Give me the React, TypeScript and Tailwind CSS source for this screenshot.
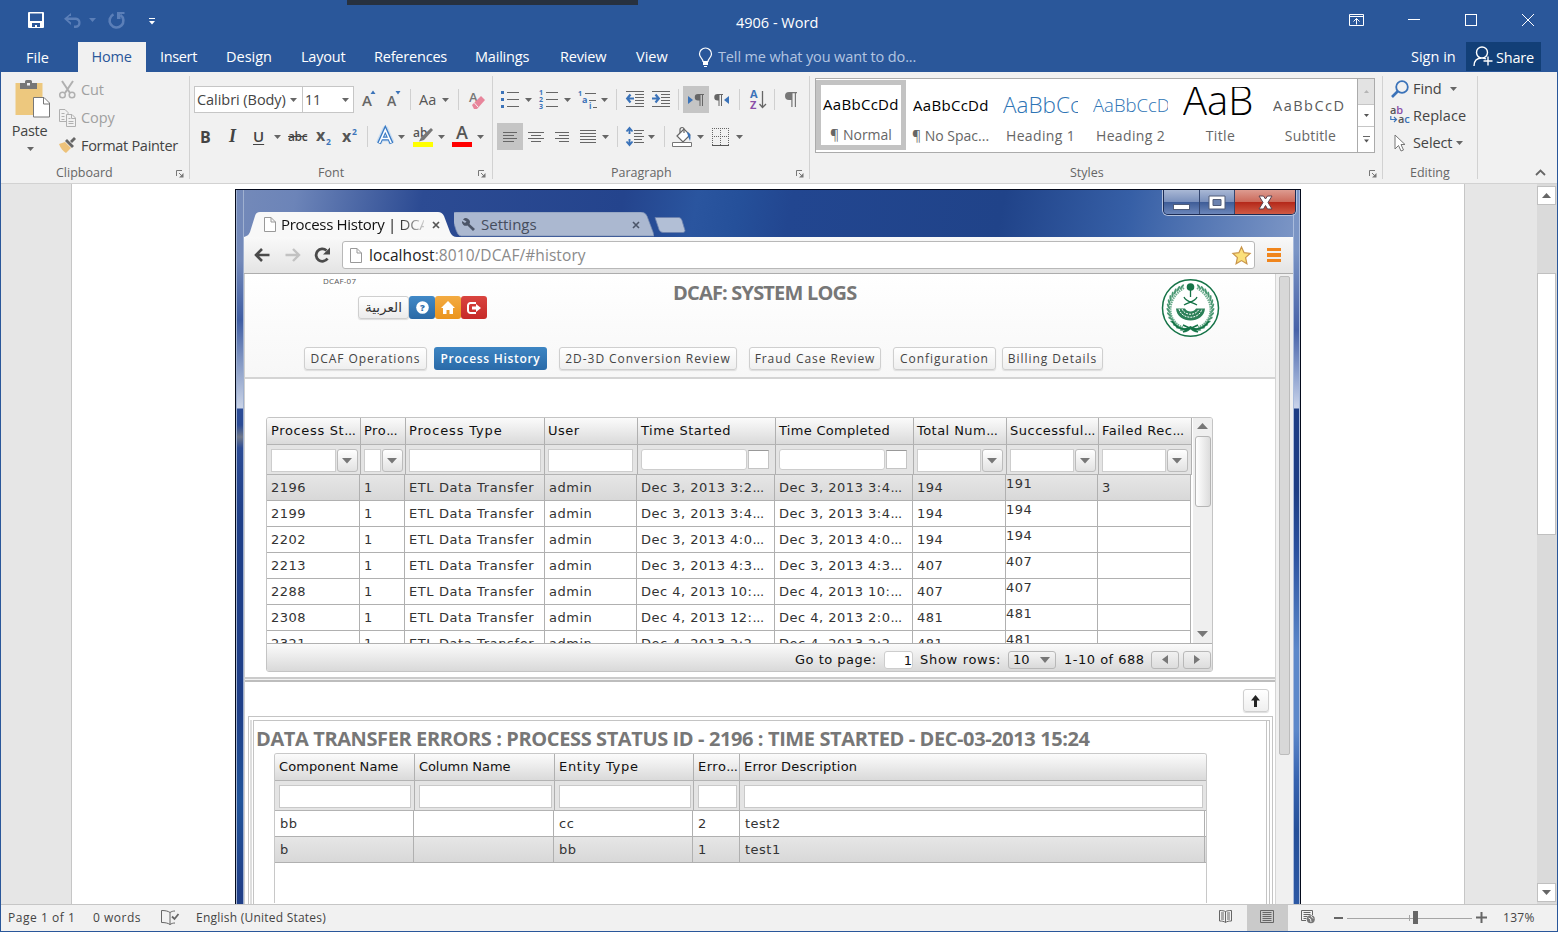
import React from 'react';

type IcoProps = { w: number; h: number; className?: string; children: React.ReactNode };

function Ico({ w, h, className = '', children }: IcoProps) {
  return (
    <svg width={w} height={h} viewBox={`0 0 ${w} ${h}`} fill="none" className={`shrink-0 overflow-visible ${className}`}>
      {children}
    </svg>
  );
}

function Caret({ className = '', color = '#666' }: { className?: string; color?: string }) {
  return (
    <Ico w={7} h={4} className={className}>
      <path d="M0 0h7L3.5 4z" fill={color} />
    </Ico>
  );
}

function Sep({ className = '' }: { className?: string }) {
  return <div className={`h-[21px] w-px shrink-0 bg-[#d0d0d0] ${className}`} />;
}

function GroupSep() {
  return <div className="mt-[4px] h-[103px] w-px shrink-0 bg-[#d2d2d2]" />;
}

function Launcher({ className = '' }: { className?: string }) {
  return (
    <Ico w={8} h={8} className={className}>
      <path d="M.5 6V.5H6" stroke="#777" />
      <path d="M3 3l3 3" stroke="#777" />
      <path d="M7.5 3v4.5H3z" fill="#777" />
    </Ico>
  );
}

function Lines({ rows, h, w }: { rows: [number, number][]; h: number; w: number }) {
  return (
    <Ico w={w} h={h}>
      {rows.map(([a, b], i) => (
        <path key={i} d={`M${a} ${i * 3 + 0.5}H${b}`} stroke="#666" />
      ))}
    </Ico>
  );
}

/* ---------- Title bar and tabs ---------- */

function TitleBar() {
  return (
    <div className="flex h-[42px] items-start">
      <Ico w={16} h={16} className="mt-[12px] ml-[27px]">
        <path d="M0 1a1 1 0 0 1 1-1h14a1 1 0 0 1 1 1v14a1 1 0 0 1-1 1H1a1 1 0 0 1-1-1z" fill="#fff" />
        <path d="M2 1.500h12V9H2zM4 11h8v4H9v-2H7v2H4z" fill="#2a579a" />
      </Ico>
      <Ico w={18} h={15} className="mt-[13px] ml-[20px]">
        <path d="M7 0v3H5.500L4 4.500h8a5.300 5.300 0 0 1 0 10.500h-2v-2.400h2a2.900 2.900 0 0 0 0-5.700H4L7 9.500V12L0 5.800z" fill="#5b7fb8" />
      </Ico>
      <Caret className="mt-[18px] ml-[7px]" color="#5b7fb8" />
      <Ico w={17} h={17} className="mt-[12px] ml-[12px]">
        <path d="M12.500 3a6.900 6.900 0 1 1-7-.6" stroke="#5b7fb8" strokeWidth="2.600" />
        <path d="M9 0h7.500v2H12.500V7H9z" fill="#5b7fb8" />
      </Ico>
      <Ico w={6} h={7} className="mt-[18px] ml-[24px]">
        <path d="M0 .5h6" stroke="#fff" />
        <path d="M0 3h6L3 6.500z" fill="#fff" />
      </Ico>
      <span className="mt-[13px] ml-[581px] w-[84px] text-[14.500px] leading-[20px] whitespace-nowrap text-white">4906 - Word</span>
      <Ico w={15} h={12} className="mt-[14px] ml-[529px]">
        <path d="M.5 .5h14v11H.5zM.5 2.500h14M7.500 10.500v-6M4.500 7.500l3-3 3 3" stroke="#fff" />
      </Ico>
      <div className="mt-[19px] ml-[44px] h-px w-[12px] bg-white" />
      <div className="mt-[14px] ml-[45px] h-[12px] w-[12px] border border-white" />
      <Ico w={12} h={12} className="mt-[14px] ml-[45px]">
        <path d="M0 0l12 12M12 0L0 12" stroke="#fff" />
      </Ico>
    </div>
  );
}

const tabs = [
  { label: 'Insert', cls: 'ml-[14px] w-[36px] tracking-[-0.350px]' },
  { label: 'Design', cls: 'ml-[30px] w-[46px] tracking-[0px]' },
  { label: 'Layout', cls: 'ml-[29px] w-[44px]' },
  { label: 'References', cls: 'ml-[29px] w-[72px]' },
  { label: 'Mailings', cls: 'ml-[29px] w-[56px]' },
  { label: 'Review', cls: 'ml-[29px] w-[47px]' },
  { label: 'View', cls: 'ml-[29px] w-[32px] tracking-[0px]' },
];

function TabBar() {
  return (
    <div className="flex h-[30px] items-center text-[14.500px] tracking-[-0.2px] whitespace-nowrap text-white">
      <span className="mt-px ml-[25px] w-[24px] tracking-[0px]">File</span>
      <span className="ml-[28px] flex h-[30px] w-[68px] items-center justify-center bg-[#f1f1f1] pr-[1px] text-[#2a579a]">Home</span>
      {tabs.map((t) => (
        <span key={t.label} className={`shrink-0 ${t.cls}`}>{t.label}</span>
      ))}
      <Ico w={13} h={19} className="ml-[31px]">
        <path d="M4 13.500c0-3-3.500-4-3.500-7.500a6 6 0 0 1 12 0c0 3.500-3.500 4.500-3.500 7.500z" stroke="#fff" strokeWidth="1.200" />
        <path d="M4 14h5v3H4zM5 18h3v1H5z" fill="#fff" />
      </Ico>
      <span className="ml-[6px] w-[199px] tracking-[-0.130px] text-[#b3c5e1]">Tell me what you want to do...</span>
      <span className="ml-[494px] w-[46px] tracking-[0px]">Sign in</span>
      <div className="mb-px ml-[9px] flex h-[29px] w-[75px] items-center bg-[#123f77]">
        <Ico w={20} h={21} className="ml-[7px]">
          <path d="M1 20c0-5 3-8 8-8a5.500 5.500 0 1 0 0-11 5.500 5.500 0 0 0 0 11c2 0 3 .4 4 1M15 10.500v9M10.500 15h9" stroke="#fff" strokeWidth="1.400" />
        </Ico>
        <span className="mt-[2px] ml-[3px]">Share</span>
      </div>
    </div>
  );
}

/* ---------- Ribbon ---------- */

function ClipboardGroup() {
  return (
    <div className="flex w-[188px] flex-col">
      <div className="flex h-[90px] shrink-0">
        <div className="flex w-[58px] flex-col items-center">
          <Ico w={36} h={39} className="mt-[8px] ml-[4px]">
            <path d="M1.500 3h27v32h-27z" fill="#edc87e" />
            <path d="M6 3h5V1.500A1.500 1.500 0 0 1 12.500 0h4A1.500 1.500 0 0 1 18 1.500V3h5v6H6z" fill="#777" />
            <path d="M13 3h3v2.500h-3z" fill="#f1f1f1" />
            <path d="M19.500 17.500H30l5.500 5.500v14h-16z" fill="#fff" stroke="#777" />
            <path d="M29.500 18v6h6" stroke="#777" />
          </Ico>
          <span className="mt-[1px] pr-[1px] text-[14.500px] leading-[22px] tracking-[-0.300px] text-[#444]">Paste</span>
          <Caret className="mt-[5px]" />
        </div>
        <div className="flex flex-col pt-[4px] text-[14.500px] tracking-[-0.1px] whitespace-nowrap">
          <div className="flex h-[28px] items-center text-[#a0a0a0]">
            <Ico w={17} h={18}>
              <path d="M3 0l8 12M14 0L6 12" stroke="#b0b0b0" strokeWidth="2" />
              <circle cx="3.500" cy="14" r="2.800" stroke="#b0b0b0" strokeWidth="1.500" />
              <circle cx="13" cy="14" r="2.800" stroke="#b0b0b0" strokeWidth="1.500" />
            </Ico>
            <span className="ml-[5px]">Cut</span>
          </div>
          <div className="flex h-[28px] items-center text-[#a0a0a0]">
            <Ico w={17} h={18}>
              <path d="M7 12.500H.5V.5H6l3 3V5M2.500 4.500h3M2.500 7.500h3M2.500 10.500h3" stroke="#b0b0b0" />
              <path d="M7.500 5.500H13l3.500 3.500v8.500h-9zM12.500 5.500v4h4M9.500 12.500h5M9.500 14.500h5M9.500 9.500h2" stroke="#b0b0b0" />
            </Ico>
            <span className="ml-[5px]">Copy</span>
          </div>
          <div className="flex h-[28px] items-center text-[#444]">
            <Ico w={17} h={16} className="mb-[2px]">
              <path d="M0 7l6-2 6 6-5 5C4 14 2 12 0 7z" fill="#edc27a" />
              <path d="M6 4l2-2 7 7-2 2zM11 4l4-4 2 2-4 4z" fill="#666" />
            </Ico>
            <span className="ml-[5px] tracking-[-0.300px]">Format Painter</span>
          </div>
        </div>
      </div>
      <div className="flex h-[23px] shrink-0 items-center text-[12.500px] text-[#666]">
        <span className="ml-[55px] w-[58px]">Clipboard</span>
        <Launcher className="ml-[62px]" />
      </div>
    </div>
  );
}

function FontGroup() {
  return (
    <div className="flex w-[302px] flex-col">
      <div className="mt-[14px] flex h-[27px] shrink-0 items-center">
        <div className="ml-[4px] flex h-[27px] w-[109px] items-center border border-[#c6c6c6] bg-white">
          <span className="ml-[2px] w-[90px] text-[14.500px] tracking-[-0.050px] whitespace-nowrap text-[#444]">Calibri (Body)</span>
          <Caret className="ml-[3px]" />
        </div>
        <div className="ml-[-1px] flex h-[27px] w-[52px] items-center border border-[#c6c6c6] bg-white">
          <span className="ml-[2px] w-[20px] text-[14px] text-[#444]">11</span>
          <Caret className="ml-[17px]" />
        </div>
        <Ico w={14} h={17} className="ml-[8px]">
          <text x="0" y="14.500" fontSize="15" fontWeight="600" fill="#666" fontFamily="Open Sans">A</text>
          <path d="M8.500 3l2.500-3.500L13.500 3z" fill="#3b73b9" />
        </Ico>
        <Ico w={14} h={17} className="ml-[11px]">
          <text x="0" y="15" fontSize="14" fontWeight="600" fill="#666" fontFamily="Open Sans">A</text>
          <path d="M8.500 0l2.500 3.500L13.500 0z" fill="#3b73b9" />
        </Ico>
        <Sep className="ml-[9px]" />
        <span className="ml-[8px] w-[20px] text-[14.500px] text-[#555]">Aa</span>
        <Caret className="ml-[3px]" />
        <Sep className="ml-[9px]" />
        <Ico w={16} h={18} className="ml-[10px]">
          <text x="0" y="11" fontSize="13" fontWeight="600" fill="#777" fontFamily="Open Sans">A</text>
          <path d="M3 14L12 5l4 4-8 9H5z" fill="#e8859b" />
          <path d="M5 11.500l4 4.500" stroke="#f1f1f1" />
        </Ico>
      </div>
      <div className="mt-[10px] flex h-[27px] shrink-0 items-center text-[#444]">
        <span className="ml-[10px] w-[14px] text-[16px] font-bold">B</span>
        <span className="ml-[15px] w-[12px] font-['Liberation_Serif',serif] text-[18px] font-bold italic">I</span>
        <span className="ml-[12px] w-[14px] text-[15px] font-semibold underline underline-offset-2">U</span>
        <Caret className="ml-[7px]" />
        <span className="ml-[7px] w-[21px] text-[12px] font-semibold tracking-[-0.400px] line-through">abc</span>
        <Ico w={16} h={18} className="ml-[7px]">
          <text x="0" y="13" fontSize="16" fontWeight="700" fill="#555" fontFamily="Open Sans">x</text>
          <text x="10" y="17" fontSize="8.500" fontWeight="700" fill="#3b73b9" fontFamily="Open Sans">2</text>
        </Ico>
        <Ico w={16} h={20} className="ml-[10px]">
          <text x="0" y="15" fontSize="16" fontWeight="700" fill="#555" fontFamily="Open Sans">x</text>
          <text x="10" y="8" fontSize="8.500" fontWeight="700" fill="#3b73b9" fontFamily="Open Sans">2</text>
        </Ico>
        <Sep className="ml-[9px]" />
        <Ico w={18} h={20} className="ml-[9px]">
          <path d="M2 16L8.300 2L14.600 16M4.500 11.500h7.600" stroke="#b9d4f0" strokeWidth="6" strokeLinejoin="round" opacity=".7" />
          <path d="M2 16.500L8.300 2.500L14.600 16.500M4.500 11.500h7.600" stroke="#3b7bc4" strokeWidth="4" />
          <path d="M2.400 16L8.300 3L14.200 16M4.500 11.500h7.600" stroke="#fff" strokeWidth="1.600" />
        </Ico>
        <Caret className="ml-[3px]" />
        <Ico w={21} h={20} className="ml-[8px]">
          <text x="0" y="10" fontSize="12" fontWeight="600" fill="#555" fontFamily="Open Sans">ab</text>
          <path d="M18 1l2 2-9 10-5 1.500 2-4z" fill="#777" />
          <path d="M0 15h20v5H0z" fill="#ff0" />
        </Ico>
        <Caret className="ml-[4px]" />
        <Ico w={20} h={21} className="ml-[7px]">
          <text x="4" y="13" fontSize="18" fontWeight="600" fill="#555" fontFamily="Open Sans">A</text>
          <path d="M0 16h20v5H0z" fill="#f00" />
        </Ico>
        <Caret className="ml-[5px]" />
      </div>
      <div className="mt-[12px] flex h-[23px] shrink-0 items-center text-[12.500px] text-[#666]">
        <span className="ml-[128px] w-[27px]">Font</span>
        <Launcher className="ml-[133px]" />
      </div>
    </div>
  );
}

function Indent({ out }: { out?: boolean }) {
  return (
    <Ico w={18} h={17}>
      <path d="M0 .5h18M9 3.500h9M9 6.500h9M9 9.500h9M9 12.500h9M0 15.500h18" stroke="#666" />
      {out ? (
        <path d="M8 7.500H1.500M4.500 3.500L1.200 7.500l3.300 4" stroke="#3b73b9" strokeWidth="2.200" />
      ) : (
        <path d="M0 7.500h6.500M3.500 3.500l3.300 4-3.300 4" stroke="#3b73b9" strokeWidth="2.200" />
      )}
    </Ico>
  );
}

function ParagraphGroup() {
  return (
    <div className="flex w-[316px] flex-col">
      <div className="mt-[14px] flex h-[27px] shrink-0 items-center">
        <Ico w={18} h={17} className="ml-[8px]">
          <path d="M0 0h3v3H0zM0 7h3v3H0zM0 14h3v3H0z" fill="#3b73b9" />
          <path d="M6 1.500h12M6 8.500h12M6 15.500h12" stroke="#666" />
        </Ico>
        <Caret className="ml-[6px]" />
        <Ico w={19} h={19} className="ml-[7px]">
          <text x="0" y="5" fontSize="7" fontWeight="700" fill="#3b73b9" fontFamily="Open Sans">1</text>
          <text x="0" y="12" fontSize="7" fontWeight="700" fill="#3b73b9" fontFamily="Open Sans">2</text>
          <text x="0" y="19" fontSize="7" fontWeight="700" fill="#3b73b9" fontFamily="Open Sans">3</text>
          <path d="M7 2.500h12M7 9.500h12M7 16.500h12" stroke="#666" />
        </Ico>
        <Caret className="ml-[6px]" />
        <Ico w={19} h={18} className="ml-[7px]">
          <text x="0" y="5" fontSize="7" fontWeight="700" fill="#3b73b9" fontFamily="Open Sans">1</text>
          <text x="4" y="12" fontSize="9" fontWeight="700" fill="#3b73b9" fontFamily="Open Sans">a</text>
          <text x="11" y="18" fontSize="8" fontWeight="700" fill="#3b73b9" fontFamily="Open Sans">i</text>
          <path d="M7 2.500h11M11 9.500h7M15 16.500h4" stroke="#666" />
        </Ico>
        <Caret className="ml-[4px]" />
        <Sep className="ml-[8px]" />
        <div className="ml-[9px]"><Indent out /></div>
        <div className="ml-[8px]"><Indent /></div>
        <Sep className="ml-[8px]" />
        <div className="ml-[4px] flex h-[27px] w-[26px] shrink-0 items-center justify-center bg-[#c5c5c5]">
          <Ico w={16} h={12}>
            <path d="M0 2v8l5-4z" fill="#3b73b9" />
            <path d="M10 0h6v1h-1v11h-1V1h-1.500v11h-1V6.500H10a3.250 3.250 0 0 1 0-6.500z" fill="#666" />
          </Ico>
        </div>
        <Ico w={16} h={12} className="ml-[5px]">
          <path d="M15 2v8l-5-4z" fill="#3b73b9" />
          <path d="M3.500 0H9v1H8v11H7V1H5.500v11h-1V6.500h-1a3.250 3.250 0 0 1 0-6.500z" fill="#666" />
        </Ico>
        <Sep className="ml-[9px]" />
        <Ico w={17} h={19} className="ml-[10px]">
          <text x="0" y="8" fontSize="11" fontWeight="700" fill="#3b73b9" fontFamily="Open Sans">A</text>
          <text x="0" y="18.500" fontSize="11" fontWeight="700" fill="#8b4fa8" fontFamily="Open Sans">Z</text>
          <path d="M12.500 1v16M9.500 14l3 3.500 3.500-3.500" stroke="#666" strokeWidth="1.300" />
        </Ico>
        <Sep className="ml-[7px]" />
        <Ico w={12} h={15} className="ml-[10px]">
          <path d="M4 0h8v1.200h-1V15H9.800V1.200H7.500V15H6.300V8H4a4 4 0 0 1 0-8z" fill="#777" />
        </Ico>
      </div>
      <div className="mt-[10px] flex h-[27px] shrink-0 items-center">
        <div className="ml-[4px] flex h-[27px] w-[26px] shrink-0 items-center justify-center bg-[#c5c5c5]">
          <Lines w={14} h={10} rows={[[0, 14], [0, 11], [0, 14], [0, 11]]} />
        </div>
        <div className="ml-[5px]"><Lines w={16} h={10} rows={[[0, 16], [3, 13], [0, 16], [3, 13]]} /></div>
        <div className="ml-[11px]"><Lines w={15} h={10} rows={[[0, 14], [4, 14], [0, 14], [4, 14]]} /></div>
        <div className="ml-[10px]"><Lines w={16} h={13} rows={[[0, 16], [0, 16], [0, 16], [0, 16], [0, 16]]} /></div>
        <Caret className="ml-[6px]" />
        <Sep className="ml-[8px]" />
        <Ico w={18} h={19} className="ml-[8px]">
          <path d="M3.500 1v6M3.500 12v6M.5 4.500L3.500 1l3 3.500M.5 14.500l3 3.500 3-3.500" stroke="#3b73b9" strokeWidth="1.900" />
          <path d="M8 3.500h10M8 6.500h8M8 9.500h10M8 12.500h8M8 15.500h10" stroke="#666" />
        </Ico>
        <Caret className="ml-[4px]" />
        <Sep className="ml-[9px]" />
        <Ico w={21} h={20} className="ml-[7px]">
          <path d="M5 9l7-7 6 6-7 7z" fill="#fff" stroke="#666" strokeWidth="1.200" />
          <path d="M8 6V2.500a2 2 0 0 1 4 0V6" stroke="#666" strokeWidth="1.200" />
          <path d="M15 5c4 1 4 5 3 9-1-3-2-4-3-9z" fill="#3b73b9" />
          <path d="M.5 15.500h19v4H.5z" fill="#fff" stroke="#777" />
        </Ico>
        <Caret className="ml-[4px]" />
        <Ico w={17} h={18} className="ml-[8px]">
          <path d="M0 .5h17M0 8.500h17M.5 0v17M8.500 0v17M16.500 0v17" stroke="#666" strokeDasharray="1 1" />
          <path d="M0 17.500h17" stroke="#555" />
        </Ico>
        <Caret className="ml-[7px]" />
      </div>
      <div className="mt-[12px] flex h-[23px] shrink-0 items-center text-[12.500px] text-[#666]">
        <span className="ml-[118px] w-[62px]">Paragraph</span>
        <Launcher className="ml-[123px]" />
      </div>
    </div>
  );
}

const styleItems = [
  { sample: 'AaBbCcDd', name: '¶ No Spac...', cls: 'pt-[3px] text-[15px] text-black tracking-[0.300px]', nameCls: '' },
  { sample: 'AaBbCc', name: 'Heading 1', cls: 'pt-[2px] text-[22.500px] font-light text-[#2e74b5]', nameCls: 'tracking-[0.350px]' },
  { sample: 'AaBbCcD', name: 'Heading 2', cls: 'pt-[2px] text-[18.500px] font-light text-[#2e74b5]', nameCls: 'tracking-[0.350px]' },
  { sample: 'AaB', name: 'Title', cls: 'pb-[8px] text-[40px] font-light text-black tracking-[0px]', nameCls: 'tracking-[0.350px]' },
  { sample: 'AaBbCcD', name: 'Subtitle', cls: 'pt-[3px] text-[14.500px] text-[#5a5a5a] tracking-[1.500px]', nameCls: 'tracking-[0.200px]' },
];

function StylesGroup() {
  return (
    <div className="flex w-[572px] flex-col">
      <div className="mt-[6px] ml-[5px] flex h-[75px] w-[560px] shrink-0 border border-[#ababab] bg-white">
        <div className="mt-px flex h-[70px] w-[90px] shrink-0 flex-col items-center border-[5px] border-[#c3c3c3]">
          <span className="mt-[8px] flex h-[24px] w-[76px] items-center text-[15px] tracking-[0.300px] whitespace-nowrap text-black">AaBbCcDd</span>
          <span className="mt-[9px] text-[14px] leading-[20px] text-[#666]">¶ Normal</span>
        </div>
        {styleItems.map((s) => (
          <div key={s.name} className="flex w-[90px] shrink-0 flex-col items-center pt-[8px] pr-px">
            <span className={`flex h-[34px] w-[75px] items-center overflow-hidden whitespace-nowrap ${s.cls}`}>{s.sample}</span>
            <span className={`mt-[5px] text-[14px] leading-[20px] whitespace-nowrap text-[#666] ${s.nameCls}`}>{s.name}</span>
          </div>
        ))}
        <div className="ml-[1px] flex w-[17px] flex-col border-l border-[#ababab]">
          <div className="flex h-[25px] items-center justify-center bg-[#e3e3e3]">
            <Ico w={5} h={3}><path d="M0 3h5L2.500 0z" fill="#b5b5b5" /></Ico>
          </div>
          <div className="flex h-[23px] items-center justify-center border-y border-[#c6c6c6]">
            <Ico w={5} h={3}><path d="M0 0h5L2.500 3z" fill="#555" /></Ico>
          </div>
          <div className="flex h-[25px] items-center justify-center">
            <Ico w={7} h={7}><path d="M0 .5h7" stroke="#666" /><path d="M1 3.500h5L3.500 6.500z" fill="#555" /></Ico>
          </div>
        </div>
      </div>
      <div className="mt-[9px] flex h-[23px] shrink-0 items-center text-[12.500px] text-[#666]">
        <span className="ml-[260px] w-[34px]">Styles</span>
        <Launcher className="ml-[265px]" />
      </div>
    </div>
  );
}

function EditingGroup() {
  return (
    <div className="flex w-[94px] flex-col whitespace-nowrap">
      <div className="flex h-[90px] shrink-0 flex-col pt-[3px] text-[14.500px] tracking-[-0.1px] text-[#444]">
        <div className="flex h-[27px] items-center">
          <Ico w={18} h={18} className="ml-[8px]">
            <circle cx="11" cy="7" r="5.800" stroke="#3b73b9" strokeWidth="1.800" />
            <path d="M7 11l-6 6" stroke="#3b73b9" strokeWidth="2.600" />
          </Ico>
          <span className="ml-[4px] w-[28px]">Find</span>
          <Caret className="ml-[9px]" />
        </div>
        <div className="flex h-[27px] items-center">
          <Ico w={21} h={19} className="ml-[7px]">
            <text x="0" y="8" fontSize="11" fontWeight="600" fill="#555" fontFamily="Open Sans">a<tspan fill="#8b4fa8">b</tspan></text>
            <text x="8" y="17" fontSize="11" fontWeight="600" fill="#555" fontFamily="Open Sans">a<tspan fill="#3b73b9">c</tspan></text>
            <path d="M.8 10v3.500H6M4 11l2.500 2.500L4 16" stroke="#3b73b9" strokeWidth="1.200" />
          </Ico>
          <span className="ml-[2px] tracking-[0.050px]">Replace</span>
        </div>
        <div className="flex h-[27px] items-center">
          <Ico w={12} h={18} className="ml-[11px]">
            <path d="M1 1v14l3.500-3.500L7 17l2.500-1-2.500-5.500h4z" fill="#fff" stroke="#777" />
          </Ico>
          <span className="ml-[7px] w-[41px]">Select</span>
          <Caret className="ml-[2px]" />
        </div>
      </div>
      <div className="flex h-[23px] shrink-0 items-center text-[12.500px] text-[#666]">
        <span className="ml-[27px]">Editing</span>
      </div>
    </div>
  );
}

function Ribbon() {
  return (
    <div className="flex h-[112px] shrink-0 border-b border-[#d2d2d2] bg-[#f1f1f1]">
      <ClipboardGroup />
      <GroupSep />
      <FontGroup />
      <GroupSep />
      <ParagraphGroup />
      <GroupSep />
      <StylesGroup />
      <GroupSep />
      <EditingGroup />
      <GroupSep />
      <Ico w={11} h={7} className="mt-[97px] ml-[57px]">
        <path d="M1 6l4.500-4.500L10 6" stroke="#666" strokeWidth="1.800" />
      </Ico>
    </div>
  );
}

/* ---------- Browser window shown in the document ---------- */

function PageIcon() {
  return (
    <Ico w={12} h={15}>
      <path d="M.5 .5H7L11.500 5v9.500H.5zM7 .5V5h4.500" fill="#fff" stroke="#999" />
    </Ico>
  );
}

function TabStrip() {
  return (
    <div className="flex h-[47px] bg-[linear-gradient(100deg,#7389b9_0%,#6c84b8_5%,#2c4b93_17%,#24448d_36%,#2a559f_43%,#25509a_47%,#224690_52%,#204389_72%,#365fa6_84%,#7b95c5_100%)]">
      <div className="relative mt-[22px] flex h-[25px] w-[210px] items-center">
        <svg width="213" height="25" viewBox="0 0 213 25" className="absolute top-0 left-0">
          <path d="M0 25C4 24 5 22 6 20L11 4Q12 0 16 0H194Q198 0 200 4L206 20Q208 25 213 25z" fill="#f8f8f8" />
        </svg>
        <div className="relative flex items-center">
          <div className="ml-[20px]"><PageIcon /></div>
          <span className="ml-[5px] w-[143px] overflow-hidden bg-[linear-gradient(90deg,#111_80%,#ccc_100%)] bg-clip-text text-[15px] tracking-[-0.3px] whitespace-nowrap text-transparent">Process History | DCAF</span>
          <Ico w={8} h={8} className="ml-[8px]"><path d="M1 1l6 6M7 1L1 7" stroke="#555" strokeWidth="1.700" /></Ico>
        </div>
      </div>
      <div className="relative mt-[22px] flex h-[25px] w-[200px] items-center">
        <svg width="200" height="25" viewBox="0 0 200 25" className="absolute top-0 left-0">
          <path d="M-3 2Q-2 0 2 0H187Q191 0 193 4L199 20L200 24H7Q4 24 2 18z" fill="#abb8d0" stroke="#7689b0" strokeWidth=".7" />
        </svg>
        <div className="relative flex items-center">
          <Ico w={13} h={13} className="ml-[8px]">
            <path d="M1 1.500A4 4 0 0 1 7.500 6L13 11l-2 2-5.500-5.500A4 4 0 0 1 0 3l3 2 1.500-1.500z" fill="#4c5568" />
          </Ico>
          <span className="ml-[6px] w-[144px] text-[15px] text-[#454d5d]">Settings</span>
          <Ico w={8} h={8} className="ml-[7px]"><path d="M1 1l6 6M7 1L1 7" stroke="#4b5569" strokeWidth="1.600" /></Ico>
        </div>
      </div>
      <Ico w={32} h={16} className="mt-[27px]">
        <path d="M1 .5h24q2 0 3 3l3 10q0 2-2 2H9q-3 0-4-3z" fill="#b2bfd6" stroke="#6d82ad" strokeWidth=".8" />
      </Ico>
      <div className="relative mr-[-3px] ml-auto flex h-[25px] w-[133px] overflow-hidden rounded-b-[5px] border border-t-0 border-[#1c2c55] shadow-[0_0_0_1px_#b5c3de]">
        <div className="flex w-[36px] items-center justify-center border-r border-[#34466f] bg-[linear-gradient(#a9b8d5_0%,#7b91bd_48%,#3f5d98_52%,#6b86ba_100%)]">
          <div className="mt-[9px] h-[6px] w-[17px] border border-[#505c78] bg-white" />
        </div>
        <div className="flex w-[35px] items-center justify-center border-r border-[#34466f] bg-[linear-gradient(#a9b8d5_0%,#7b91bd_48%,#3f5d98_52%,#6b86ba_100%)]">
          <Ico w={18} h={15}>
            <path d="M1 1h16v13H1z" fill="#fff" stroke="#505c78" />
            <path d="M5 4.500h8v6H5z" fill="#6c83b0" stroke="#505c78" />
          </Ico>
        </div>
        <div className="flex flex-1 items-center justify-center bg-[linear-gradient(#dd9b90_0%,#cc6b5c_48%,#b5291a_52%,#cf5a44_100%)]">
          <Ico w={15} h={15}>
            <path d="M1 1h4.500l2 3 2-3H14L10 7.500l4 6.500H9.500l-2-3.500-2 3.500H1l4-6.500z" fill="#fff" stroke="#5a4450" />
          </Ico>
        </div>
      </div>
    </div>
  );
}

function UrlBar() {
  return (
    <div className="flex h-[37px] items-center rounded-t-[3px] border-b border-[#adadad] bg-[linear-gradient(#f9f9f9,#e4e4e4)]">
      <Ico w={16} h={14} className="ml-[10px]">
        <path d="M15.500 7H2M8 1L2 7l6 6" stroke="#4a4a4a" strokeWidth="2.600" />
      </Ico>
      <Ico w={16} h={14} className="ml-[15px]">
        <path d="M.5 7H14M8 1l6 6-6 6" stroke="#c2c2c2" strokeWidth="2.400" />
      </Ico>
      <Ico w={17} h={16} className="ml-[13px]">
        <path d="M13.500 11.500A6.200 6.200 0 1 1 12.500 3.500" stroke="#4a4a4a" strokeWidth="2.800" />
        <path d="M16 .5V7.500H9z" fill="#4a4a4a" />
      </Ico>
      <div className="ml-[11px] flex h-[28px] w-[913px] items-center rounded-[3px] border border-[#b8b8b8] bg-white">
        <div className="ml-[7px]"><PageIcon /></div>
        <span className="mt-px ml-[7px] w-[220px] text-[15.500px] tracking-[0.080px] whitespace-nowrap text-[#8a8a8a]">
          <span className="text-[#222]">localhost</span>:8010/DCAF/#history
        </span>
        <Ico w={19} h={19} className="ml-[643px]">
          <path d="M9.500 1l2.600 5.700 6 .7-4.500 4.200 1.300 6.200-5.400-3.200-5.400 3.200 1.300-6.200L.9 7.400l6-.7z" fill="#fbe07a" stroke="#c9954a" strokeWidth="1.200" />
        </Ico>
      </div>
      <div className="ml-[12px] flex flex-col gap-[2px]">
        <div className="h-[3px] w-[14px] bg-[#f0851c]" />
        <div className="h-[4px] w-[14px] bg-[#f0851c]" />
        <div className="h-[3px] w-[14px] bg-[#f0851c]" />
      </div>
    </div>
  );
}

function Emblem() {
  const leaves = Array.from({ length: 15 }, (_, i) => {
    const a = ((100 + i * 10.5) * Math.PI) / 180;
    return { x: 28.5 + Math.cos(a) * 22, y: 29 + Math.sin(a) * 23, r: 100 + i * 10.5 };
  });
  return (
    <Ico w={58} h={59}>
      <ellipse cx="28.500" cy="29" rx="28" ry="28.200" stroke="#157347" strokeWidth="1.500" fill="#fff" />
      {leaves.map((l, i) => (
        <g key={i}>
          <ellipse cx={l.x} cy={l.y} rx="3.200" ry="1.100" fill="#4a9873" transform={`rotate(${l.r + 60} ${l.x} ${l.y})`} />
          <ellipse cx={57 - l.x} cy={l.y} rx="3.200" ry="1.100" fill="#4a9873" transform={`rotate(${120 - l.r} ${57 - l.x} ${l.y})`} />
        </g>
      ))}
      <path d="M22 9C4 20 4 42 22 49M35 9c18 11 18 33 0 40" stroke="#6dad8e" strokeWidth="2" strokeDasharray="1.500 .8" />
      <circle cx="28.500" cy="8" r="3.800" fill="#157347" />
      <path d="M28.500 9v9" stroke="#157347" strokeWidth="1.300" />
      <path d="M22 18c2 5 8 5 13 8M35 18c-2 5-8 5-13 8" stroke="#157347" strokeWidth="1.300" />
      <path d="M14 29.500c1 16 28 16 29 0H34c-2 4-9 4-11 0z" fill="#2c8058" />
      <path d="M17 30c3 11 20 11 23 0M20 30c3 7 14 7 17 0" stroke="#fff" strokeWidth="1" strokeDasharray="2 1" />
      <path d="M10 42c5 8 13 10 18.500 6 5.500 4 13 2 18.500-6M21 53l15-7M36 53l-15-7" stroke="#157347" strokeWidth="1.700" />
    </Ico>
  );
}

const navItems = [
  { label: '2D-3D Conversion Review', cls: 'ml-[12px] w-[178px]' },
  { label: 'Fraud Case Review', cls: 'ml-[12px] w-[132px]' },
  { label: 'Configuration', cls: 'ml-[12px] w-[103px]' },
  { label: 'Billing Details', cls: 'ml-[6px] w-[101px]' },
];

const navButton = 'flex h-[23px] shrink-0 items-center justify-center rounded-[3px] border border-[#cfcfcf] bg-[linear-gradient(#fff,#efefef)] shadow-[0_1px_1px_#ddd]';

function AppHeader() {
  return (
    <div className="flex h-[105px] shrink-0 border-b-2 border-[#d4d4d4] bg-[linear-gradient(#fff,#f7f7f7)]">
      <div className="flex w-full flex-col">
        <div className="flex h-[73px]">
          <div className="flex w-[428px] flex-col">
            <span className="mt-[2px] ml-[78px] text-[8px] leading-[9px] tracking-[0.200px] text-[#555]">DCAF-07</span>
            <div className="mt-[11px] ml-[113px] flex h-[23px]">
              <span className="flex w-[51px] items-center justify-center rounded-[3px] border border-[#cfcfcf] bg-[linear-gradient(#fff,#ececec)] font-['DejaVu_Sans',sans-serif] text-[13.500px] text-[#333] shadow-[0_1px_1px_#ddd]">العربية</span>
              <span className="flex w-[26px] items-center justify-center rounded-[3px] bg-[linear-gradient(#4189c7,#2b69a5)]">
                <Ico w={13} h={13}>
                  <circle cx="6.500" cy="6.500" r="6.300" fill="#fff" />
                  <text x="3.900" y="10" fontSize="9.500" fontWeight="800" fill="#2f6fac" fontFamily="Open Sans">?</text>
                </Ico>
              </span>
              <span className="flex w-[26px] items-center justify-center rounded-[3px] bg-[linear-gradient(#f3ab42,#eb941c)]">
                <Ico w={14} h={13}>
                  <path d="M7 0l7 7h-2v6H8.500V9h-3v4H2V7H0z" fill="#fff" />
                </Ico>
              </span>
              <span className="flex w-[26px] items-center justify-center rounded-[3px] bg-[linear-gradient(#d9443f,#c62a28)]">
                <Ico w={14} h={12}>
                  <path d="M9 1H3.500A2.500 2.500 0 0 0 1 3.500v5A2.500 2.500 0 0 0 3.500 11H9" stroke="#fff" strokeWidth="2" />
                  <path d="M5 4.500h4V2l5 4-5 4V7.500H5z" fill="#fff" />
                </Ico>
              </span>
            </div>
          </div>
          <h1 className="mt-[5px] w-[200px] text-[20px] leading-[28px] font-bold tracking-[-0.820px] whitespace-nowrap text-[#777]">DCAF: SYSTEM LOGS</h1>
          <div className="mt-[5px] ml-[289px]"><Emblem /></div>
        </div>
        <div className="flex text-[12px] tracking-[0.950px] whitespace-nowrap text-[#444]">
          <span className={`${navButton} ml-[59px] w-[123px]`}>DCAF Operations</span>
          <span className="ml-[7px] flex h-[23px] w-[113px] shrink-0 items-center justify-center rounded-[3px] bg-[linear-gradient(#3d85c3,#2a6aa8)] font-semibold tracking-[0.700px] text-white">Process History</span>
          {navItems.map((n) => (
            <span key={n.label} className={`${navButton} ${n.cls}`}>{n.label}</span>
          ))}
        </div>
      </div>
    </div>
  );
}

function CellText({ text, className = '' }: { text: string; className?: string }) {
  const cut = text.endsWith('...');
  return (
    <span className={`whitespace-nowrap ${className}`}>
      {cut ? text.slice(0, -3) : text}
      {cut && <span className="tracking-[-0.400px]">...</span>}
    </span>
  );
}

function DropButton() {
  return (
    <span className="ml-px flex h-[23px] w-[21px] shrink-0 items-center justify-center rounded-[3px] border border-[#bcbcbc] bg-[linear-gradient(#fff,#e2e2e2)] pr-px">
      <Ico w={10} h={6}><path d="M0 0h10L5 5.500z" fill="#777" /></Ico>
    </span>
  );
}

const columns = [
  { head: 'Process St...', w: 'w-[94px]', bw: 'w-[93px]', pad: 'pl-[4px]', kind: 'drop', inp: 'w-[65px]', track: 'tracking-[0.650px]' },
  { head: 'Pro...', w: 'w-[45px]', bw: 'w-[45px]', pad: 'pl-[3px]', kind: 'drop', inp: 'w-[17px]', track: '' },
  { head: 'Process Type', w: 'w-[139px]', bw: 'w-[140px]', pad: 'pl-[3px]', kind: 'text', inp: 'w-[132px]', track: 'tracking-[0.850px]' },
  { head: 'User', w: 'w-[93px]', bw: 'w-[92px]', pad: 'pl-[3px]', kind: 'text', inp: 'w-[85px]', track: '' },
  { head: 'Time Started', w: 'w-[138px]', bw: 'w-[138px]', pad: 'pl-[3px]', kind: 'date', inp: 'w-[106px]', track: '' },
  { head: 'Time Completed', w: 'w-[138px]', bw: 'w-[138px]', pad: 'pl-[3px]', kind: 'date', inp: 'w-[106px]', track: 'tracking-[0.300px]' },
  { head: 'Total Num...', w: 'w-[93px]', bw: 'w-[93px]', pad: 'pl-[3px]', kind: 'drop', inp: 'w-[64px]', track: 'tracking-[0.450px]' },
  { head: 'Successful...', w: 'w-[92px]', bw: 'w-[92px]', pad: 'pl-[3px]', kind: 'drop', inp: 'w-[64px]', track: '' },
  { head: 'Failed Rec...', w: 'w-[93px]', bw: 'w-[93px]', pad: 'pl-[3px]', kind: 'drop', inp: 'w-[64px]', track: '' },
];

const records = [
  ['2196', '1', 'ETL Data Transfer', 'admin', 'Dec 3, 2013 3:2...', 'Dec 3, 2013 3:4...', '194', '191', '3'],
  ['2199', '1', 'ETL Data Transfer', 'admin', 'Dec 3, 2013 3:4...', 'Dec 3, 2013 3:4...', '194', '194', ''],
  ['2202', '1', 'ETL Data Transfer', 'admin', 'Dec 3, 2013 4:0...', 'Dec 3, 2013 4:0...', '194', '194', ''],
  ['2213', '1', 'ETL Data Transfer', 'admin', 'Dec 3, 2013 4:3...', 'Dec 3, 2013 4:3...', '407', '407', ''],
  ['2288', '1', 'ETL Data Transfer', 'admin', 'Dec 4, 2013 10:...', 'Dec 4, 2013 10:...', '407', '407', ''],
  ['2308', '1', 'ETL Data Transfer', 'admin', 'Dec 4, 2013 12:...', 'Dec 4, 2013 2:0...', '481', '481', ''],
  ['2321', '1', 'ETL Data Transfer', 'admin', 'Dec 4, 2013 2:2...', 'Dec 4, 2013 2:2...', '481', '481', ''],
];

const tableFont = "font-['DejaVu_Sans',sans-serif] text-[13px] tracking-[0.500px]";

function HistoryTable() {
  return (
    <div className={`ml-[21px] h-[255px] w-[947px] shrink-0 overflow-hidden rounded-[3px] border border-[#c4c4c4] bg-white ${tableFont} text-[#333]`}>
      <div className="flex h-[225px]">
        <div className="h-[225px] w-[926px] shrink-0 overflow-hidden">
          <div className="flex h-[27px] w-[925px] border-b border-[#b3b3b3] bg-[linear-gradient(#fbfbfb,#dadada)] text-[#111]">
            {columns.map((c) => (
              <div key={c.head} className={`flex shrink-0 items-center border-r border-[#b0b0b0] ${c.w} ${c.pad}`}>
                <CellText text={c.head} className={c.track} />
              </div>
            ))}
          </div>
          <div className="flex h-[30px] w-[925px] border-b border-[#b3b3b3] bg-[#e4e4e4]">
            {columns.map((c) => (
              <div key={c.head} className={`flex shrink-0 items-start border-r border-[#b0b0b0] pt-[4px] ${c.w} ${c.pad}`}>
                {c.kind === 'date' ? (
                  <>
                    <span className={`h-[21px] shrink-0 rounded-[3px] border border-[#cdcdcd] bg-white ${c.inp}`} />
                    <span className="mt-px ml-px h-[19px] w-[21px] shrink-0 border border-[#c4c4c4] border-t-[#999] bg-white" />
                  </>
                ) : (
                  <>
                    <span className={`h-[23px] shrink-0 border border-[#cdcdcd] bg-white ${c.inp}`} />
                    {c.kind === 'drop' && <DropButton />}
                  </>
                )}
              </div>
            ))}
          </div>
          {records.map((r, i) => (
            <div key={i} className={`flex h-[26px] w-[924px] border-b border-[#b0b0b0] ${i === 0 ? 'bg-[linear-gradient(#e6e6e6,#d8d8d8)]' : 'bg-white'}`}>
              {r.map((v, j) => (
                <div key={j} className={`flex shrink-0 items-center border-r border-[#b0b0b0] ${columns[j].bw} ${j === 7 ? 'pb-[7px] pl-0' : 'pt-px pl-[4px]'} ${j === 2 ? 'tracking-[0.600px]' : ''}`}>
                  <CellText text={v} />
                </div>
              ))}
            </div>
          ))}
        </div>
        <div className="flex h-[225px] flex-1 flex-col items-center bg-[#efefef] pt-[5px]">
          <Ico w={11} h={6}><path d="M0 6h11L5.500 0z" fill="#777" /></Ico>
          <div className="mt-[7px] ml-[1px] h-[71px] w-[16px] rounded-[3px] border border-[#b5b5b5] bg-[linear-gradient(90deg,#fff,#dcdcdc)]" />
          <Ico w={11} h={6} className="mt-[124px]"><path d="M0 0h11L5.500 6z" fill="#777" /></Ico>
        </div>
      </div>
      <div className="flex h-[28px] items-center border-t border-[#b0b0b0] bg-[linear-gradient(#fbfbfb,#d9d9d9)] pt-[4px] whitespace-nowrap text-[#111]">
        <div className="ml-[528px] w-[89px]">Go to page:</div>
        <div className="h-[18px] w-[29px] rounded-[3px] border border-[#cdcdcd] bg-white text-right leading-[17px] tracking-normal">1</div>
        <div className="ml-[7px] w-[88px] tracking-[0.700px]">Show rows:</div>
        <div className="flex h-[18px] w-[48px] items-center rounded-[3px] border border-[#b8b8b8] bg-[linear-gradient(#f5f5f5,#dadada)] pl-[4px] tracking-[0px]">
          10
          <Ico w={10} h={6} className="ml-[10px]"><path d="M0 0h10L5 6z" fill="#777" /></Ico>
        </div>
        <div className="ml-[8px] w-[87px] tracking-[0.500px]">1-10 of 688</div>
        <span className="flex h-[18px] w-[28px] items-center justify-center rounded-[3px] border border-[#b8b8b8]"><Ico w={6} h={9}><path d="M6 0v9L0 4.500z" fill="#777" /></Ico></span>
        <span className="ml-[4px] flex h-[18px] w-[28px] items-center justify-center rounded-[3px] border border-[#b8b8b8]"><Ico w={6} h={9}><path d="M0 0v9l6-4.500z" fill="#777" /></Ico></span>
      </div>
    </div>
  );
}

const errorColumns = [
  { head: 'Component Name', w: 'w-[140px]', bw: 'w-[139px]', inp: 'w-[132px]', track: 'tracking-[0.100px]' },
  { head: 'Column Name', w: 'w-[140px]', bw: 'w-[140px]', inp: 'w-[133px]', track: 'tracking-[-0.080px]' },
  { head: 'Entity Type', w: 'w-[139px]', bw: 'w-[139px]', inp: 'w-[132px]', track: 'tracking-[0.700px]' },
  { head: 'Erro...', w: 'w-[46px]', bw: 'w-[47px]', inp: 'w-[39px]', track: '' },
  { head: 'Error Description', w: 'w-[466px]', bw: 'w-[465px]', inp: 'w-[459px]', track: 'tracking-[0.200px]' },
];

const errorRows = [
  ['bb', '', 'cc', '2', 'test2'],
  ['b', '', 'bb', '1', 'test1'],
];

function ErrorTable() {
  return (
    <div className={`ml-[20px] h-[150px] w-[933px] overflow-hidden rounded-t-[3px] border border-b-0 border-[#c8c8c8] ${tableFont} text-[#333]`}>
      <div className="flex h-[27px] border-b border-[#b3b3b3] bg-[linear-gradient(#fbfbfb,#dadada)] text-[#111]">
        {errorColumns.map((c) => (
          <div key={c.head} className={`flex shrink-0 items-center border-r border-[#b0b0b0] pl-[4px] last:border-r-0 ${c.w}`}>
            <CellText text={c.head} className={c.track} />
          </div>
        ))}
      </div>
      <div className="flex h-[30px] border-b border-[#b3b3b3] bg-[#e4e4e4]">
        {errorColumns.map((c) => (
          <div key={c.head} className={`shrink-0 border-r border-[#b0b0b0] pt-[4px] pl-[4px] last:border-r-0 ${c.w}`}>
            <div className={`h-[23px] border border-[#c9c9c9] bg-white ${c.inp}`} />
          </div>
        ))}
      </div>
      {errorRows.map((r, i) => (
        <div key={i} className={`flex h-[26px] border-b border-[#b0b0b0] ${i === 1 ? 'bg-[linear-gradient(#e6e6e6,#d8d8d8)]' : ''}`}>
          {r.map((v, j) => (
            <div key={j} className={`flex shrink-0 items-center border-r border-[#b0b0b0] pl-[5px] ${errorColumns[j].bw}`}>{v}</div>
          ))}
        </div>
      ))}
    </div>
  );
}

function BrowserWindow() {
  return (
    <div className="flex h-[715px] w-[1066px] shrink-0 overflow-hidden border-x border-t border-[#050b1c]">
      <div className="w-[8px] shrink-0 border-r border-l border-[#9fb0d0] bg-[linear-gradient(#7389b9_0px,#7389b9_70px,#3f5da3_130px,#8095c2_170px,#c9d3e7_218px,#2b4b95_219px,#2b4b95_235px,#6f7788_247px,#2b4b95_258px,#1f3f88_330px,#1f3f88_520px,#20549b_610px,#203f88_700px)]" />
      <div className="relative z-10 flex w-[1049px] shrink-0 flex-col">
        <TabStrip />
        <UrlBar />
        <div className="flex h-[630px] bg-white">
          <div className="flex w-[1031px] flex-col border-l border-[#cfcfcf]">
            <AppHeader />
            <div className="flex h-[303px] shrink-0 flex-col border-b-2 border-[#bdbdbd] pt-[38px]">
              <HistoryTable />
              <div className="mt-[5px] h-[2px] bg-[#cbcbcb]" />
              <div className="flex-1 bg-[#f2f2f2]" />
            </div>
            <div className="flex h-[34px] shrink-0 items-start justify-end pt-[7px] pr-[6px]">
              <span className="flex h-[23px] w-[26px] items-center justify-center rounded-[3px] border border-[#cfcfcf] bg-[linear-gradient(#fff,#efefef)] pr-px shadow-[0_1px_1px_#ddd]">
                <Ico w={9} h={12}><path d="M4.500 0L9 5.500H6V12H3V5.500H0z" fill="#222" /></Ico>
              </span>
            </div>
            <div className="mr-[2px] ml-[3px] flex-1 border border-b-0 border-[#c4c4c4] pt-[3px] pr-[2px] pl-[1px]">
              <div className="h-[184px] border-l-2 border-[#dedede] pl-[1px]">
                <div className="h-full border border-b-0 border-[#c4c4c4] pr-[2px]">
                  <div className="h-full border-r border-[#c4c4c4]">
                    <h2 className="pt-[4px] pl-[2px] text-[20px] leading-[28px] font-bold tracking-[-0.395px] whitespace-nowrap text-[#777]">
                      DATA TRANSFER ERRORS : PROCESS STATUS ID - 2196 : TIME STARTED - DEC-03-2013 15:24
                    </h2>
                    <ErrorTable />
                  </div>
                </div>
              </div>
            </div>
          </div>
          <div className="flex flex-1 justify-center border-l border-[#d5d5d5] bg-[#f0f0f0] pt-[2px]">
            <div className="h-[479px] w-[11px] rounded-[2px] border border-[#bcbcbc] bg-[#d8d8d8]" />
          </div>
        </div>
      </div>
      <div className="w-[7px] shrink-0 border-r border-l border-[#a9bbdc] bg-[linear-gradient(#7b95c5_0px,#7b95c5_60px,#4762a8_140px,#8fa3d0_185px,#c9d3ea_218px,#1d3d84_219px,#1d3d84_300px,#2a519f_360px,#5c88ca_460px,#5c88ca_540px,#3763b0_590px,#25509a_640px,#2c58a4_714px)]" />
    </div>
  );
}

/* ---------- Document area and status bar ---------- */

function DocumentArea() {
  return (
    <div className="flex h-[720px] shrink-0 bg-[#e6e6e6]">
      <div className="ml-[70px] flex w-[1394px] shrink-0 border-x border-[#c6c6c6] bg-white pt-[5px] pl-[163px]">
        <BrowserWindow />
      </div>
      <div className="ml-auto flex w-[20px] flex-col bg-[#dadada] py-[2px]">
        <div className="flex h-[19px] w-[19px] items-center justify-center border border-[#c0c0c0] bg-white">
          <Ico w={9} h={5}><path d="M0 5h9L4.500 0z" fill="#666" /></Ico>
        </div>
        <div className="mt-[68px] h-[262px] w-[19px] border border-[#c0c0c0] bg-white" />
        <div className="mt-auto flex h-[19px] w-[19px] items-center justify-center border border-[#c0c0c0] bg-white">
          <Ico w={9} h={5}><path d="M0 0h9L4.500 5z" fill="#666" /></Ico>
        </div>
      </div>
    </div>
  );
}

function StatusBar() {
  return (
    <div className="flex h-[27px] shrink-0 items-center border-t border-[#c6c6c6] bg-[#f1f1f1] text-[12px] whitespace-nowrap text-[#444]">
      <span className="ml-[7px] w-[68px] tracking-[0.550px]">Page 1 of 1</span>
      <span className="ml-[17px] w-[49px] tracking-[0.500px]">0 words</span>
      <Ico w={18} h={15} className="mb-[2px] ml-[19px]">
        <path d="M9 2.500C7 1 4 .5 .5 .5v12c3.500 0 6.500.5 8.500 2M9 2.500v12M9 2.500c1.500-1 3-1.500 5-1.500M9 14.500c1.500-1 3-1.500 5-1.500" stroke="#666" />
        <path d="M11 6.500l2.500 2.500L17.500 4" stroke="#666" strokeWidth="1.800" />
      </Ico>
      <span className="ml-[17px] w-[132px] tracking-[0.230px]">English (United States)</span>
      <Ico w={13} h={13} className="mb-[3px] ml-[891px]">
        <path d="M6.500 1.500C5 .8 3 .5 .5 .5v10.500c2.500 0 4.500.3 6 1.500 1.500-1.200 3.500-1.500 6-1.500V.5c-2.500 0-4.500.3-6 1zM6.500 1.500v11M2 3h3M2 5h3M2 7h3M2 9h3M8 3h3M8 5h3M8 7h3M8 9h3" stroke="#666" />
      </Ico>
      <div className="ml-[15px] flex h-[26px] w-[41px] items-center justify-center bg-[#cacaca] pr-px">
        <Ico w={14} h={13} className="mb-[3px]">
          <path d="M.5 .5h13v12H.5zM2.500 2.500h9M2.500 4.500h9M2.500 6.500h9M2.500 8.500h9M2.500 10.500h9" stroke="#666" />
        </Ico>
      </div>
      <Ico w={14} h={14} className="mb-[2px] ml-[13px]">
        <path d="M5 10.500H.5V.5h11V5M2.500 2.500h7M2.500 4.500h7M2.500 6.500h4M2.500 8.500h3" stroke="#666" />
        <circle cx="9.800" cy="9.200" r="4" fill="#777" />
        <path d="M7.500 8l2 1 .5 3M10 6l2 2.500" stroke="#f1f1f1" />
      </Ico>
      <div className="mb-px ml-[19px] h-[2px] w-[9px] bg-[#666]" />
      <div className="ml-[4px] h-px w-[62px] bg-[#a5a5a5]" />
      <div className="h-[6px] w-px bg-[#a5a5a5]" />
      <div className="h-px w-[3px] bg-[#a5a5a5]" />
      <div className="mb-px h-[13px] w-[5px] bg-[#666]" />
      <div className="h-px w-[54px] bg-[#a5a5a5]" />
      <Ico w={11} h={11} className="mb-px ml-[4px]"><path d="M0 5.500h11M5.500 0v11" stroke="#666" strokeWidth="2" /></Ico>
      <span className="ml-[16px] tracking-[0.300px]">137%</span>
    </div>
  );
}

export default function App() {
  return (
    <div className="relative flex h-[932px] w-[1558px] flex-col overflow-hidden border-x border-b border-[#2a579a] bg-[#2a579a] font-['Open_Sans',sans-serif]">
      <div className="absolute top-0 left-[346px] h-[5px] w-[291px] bg-[#27313f]" />
      <TitleBar />
      <TabBar />
      <Ribbon />
      <DocumentArea />
      <StatusBar />
    </div>
  );
}
